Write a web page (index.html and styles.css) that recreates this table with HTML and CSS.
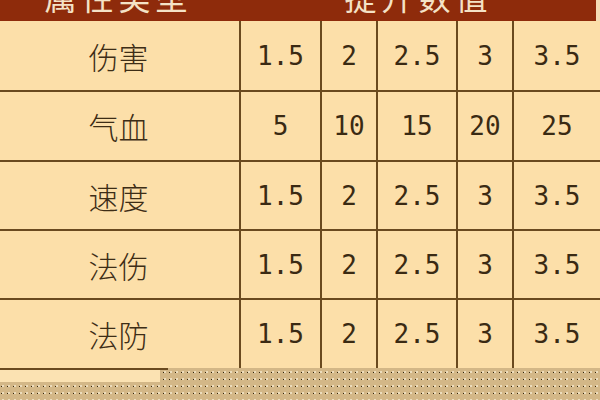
FILE: index.html
```html
<!DOCTYPE html>
<html lang="zh">
<head>
<meta charset="utf-8">
<title>属性提升表</title>
<link rel="stylesheet" href="styles.css">
</head>
<body>
<div class="page">
  <div class="grid">
    <div class="hd hd-left"><span>属性类型</span></div>
    <div class="hd hd-right"><span>提升数值</span></div>

    <div class="c name">伤害</div>
    <div class="c num">1.5</div>
    <div class="c num">2</div>
    <div class="c num">2.5</div>
    <div class="c num">3</div>
    <div class="c num last">3.5</div>

    <div class="c name">气血</div>
    <div class="c num">5</div>
    <div class="c num">10</div>
    <div class="c num">15</div>
    <div class="c num">20</div>
    <div class="c num last">25</div>

    <div class="c name">速度</div>
    <div class="c num">1.5</div>
    <div class="c num">2</div>
    <div class="c num">2.5</div>
    <div class="c num">3</div>
    <div class="c num last">3.5</div>

    <div class="c name">法伤</div>
    <div class="c num">1.5</div>
    <div class="c num">2</div>
    <div class="c num">2.5</div>
    <div class="c num">3</div>
    <div class="c num last">3.5</div>

    <div class="c name end">法防</div>
    <div class="c num end">1.5</div>
    <div class="c num end">2</div>
    <div class="c num end">2.5</div>
    <div class="c num end">3</div>
    <div class="c num last end">3.5</div>
  </div>
  <div class="tail">
    <div class="tail-line"></div>
    <div class="tail-strip"></div>
  </div>
</div>
</body>
</html>
```
FILE: styles.css
```css
html, body {
  margin: 0;
  padding: 0;
}

body {
  width: 600px;
  height: 400px;
  overflow: hidden;
  background-color: #d3b787;
  background-image:
    radial-gradient(circle at 1.5px 1.5px, #33260f 0.6px, transparent 1px),
    radial-gradient(circle at 3px 1px, #f6ead0 0.6px, transparent 1px);
  background-size: 6px 7px, 6px 7px;
  font-family: "Noto Sans CJK SC", "Noto Sans", sans-serif;
}

.page {
  width: 600px;
}

.grid {
  display: grid;
  grid-template-columns: 241px 81px 56px 80px 56px 86px;
  grid-template-rows: 21px 71px 70px 69px 69px 68px;
}

.hd {
  background: #8e2b0b;
  color: #f4e2c6;
  height: 21px;
  overflow: hidden;
  display: flex;
  align-items: flex-end;
  justify-content: center;
}

.hd span {
  display: block;
  font-size: 32px;
  line-height: 1;
  letter-spacing: 5px;
  margin-bottom: 9px;
  white-space: nowrap;
}

.hd-left {
  padding-right: 4px;
}

.hd-right {
  grid-column: 2 / span 5;
  border-right: 4px solid #f3dcb4;
  box-sizing: border-box;
}

.c {
  background: #fcdfa9;
  color: #3a2a13;
  box-sizing: border-box;
  border-right: 2px solid #6a4a1f;
  border-bottom: 2px solid #6a4a1f;
  display: flex;
  align-items: center;
  justify-content: center;
}

.c.last {
  border-right: none;
}

.c.end {
  border-bottom: none;
}

.name {
  font-size: 30px;
  font-weight: 300;
  padding-right: 2px;
  color: #3d2d16;
}

.num {
  font-family: "DejaVu Sans Mono", "Liberation Mono", monospace;
  font-size: 26px;
}

.tail {
  display: flex;
  flex-direction: column;
}

.tail-line {
  width: 168px;
  height: 2px;
  background: #6a4a1f;
}

.tail-strip {
  width: 160px;
  height: 12px;
  background: #fbe2b2;
}
```
